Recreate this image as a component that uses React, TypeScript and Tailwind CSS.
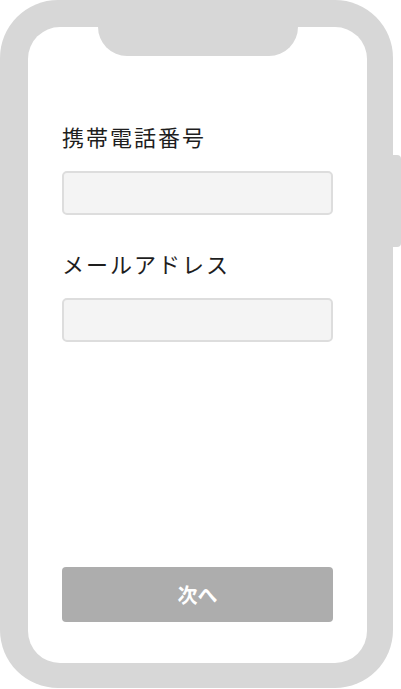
import React from 'react'

const font = { fontFamily: '"Noto Sans CJK JP", "Noto Sans", sans-serif' }

function Field({ label }: { label: string }) {
  return (
    <div className="flex flex-col">
      <label className="text-[22px] leading-[22px] tracking-[2px] text-[#1e1e1e]">{label}</label>
      <input
        type="text"
        className="mt-[24px] h-[44px] w-full rounded-[5px] border-2 border-[#dddddd] bg-[#f4f4f4] outline-none"
      />
    </div>
  )
}

export default function App() {
  return (
    <div className="flex h-[689px] w-[401px] bg-white" style={font}>
      {/* 本体 */}
      <div className="h-[688px] w-[393px] rounded-[58px] bg-[#d7d7d7] pb-[25px] pl-[28px] pr-[26px] pt-[27px]">
        <div className="flex h-full flex-col rounded-[32px] bg-white">
          {/* ノッチ */}
          <div className="mx-auto h-[29px] w-[200px] rounded-b-[30px] bg-[#d7d7d7]" />

          <div className="flex flex-1 flex-col px-[34px] pb-[41px] pt-[69px]">
            <Field label="携帯電話番号" />
            <div className="h-[37px]" />
            <Field label="メールアドレス" />

            <div className="flex-1" />

            <button className="h-[55px] w-full rounded-[4px] bg-[#adadad] text-[20px] font-bold text-white">
              次へ
            </button>
          </div>
        </div>
      </div>
      {/* サイドボタン */}
      <div className="mt-[155px] h-[92px] w-[8px] rounded-r-[4px] bg-[#d7d7d7]" />
    </div>
  )
}
